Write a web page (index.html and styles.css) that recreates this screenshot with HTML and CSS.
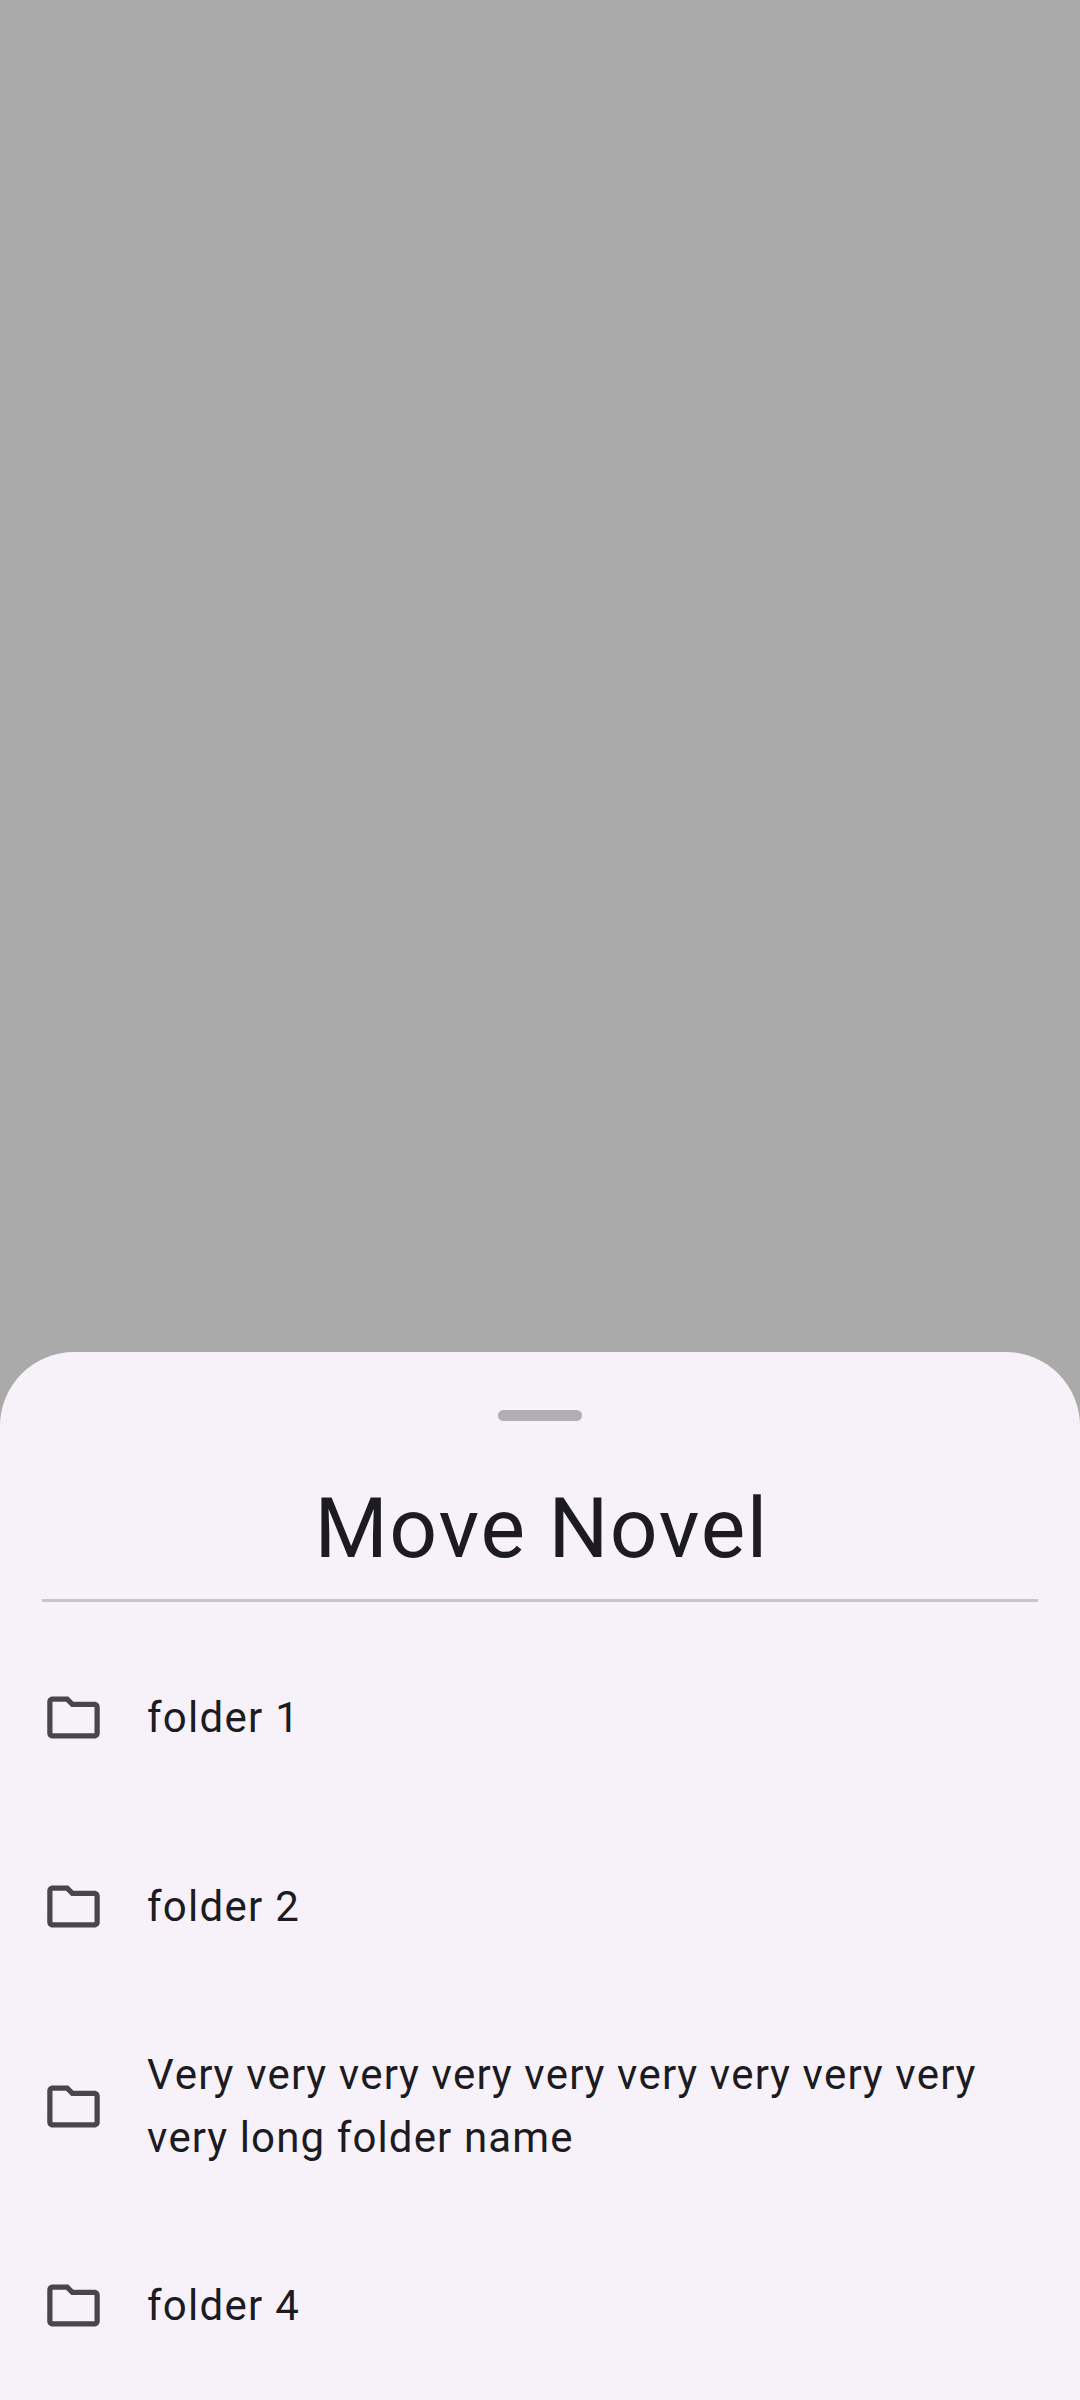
FILE: index.html
```html
<!DOCTYPE html>
<html lang="en">
<head>
<meta charset="utf-8">
<title>Move Novel</title>
<link rel="stylesheet" href="styles.css">
</head>
<body>
<svg class="defs" aria-hidden="true"><symbol id="folder" viewBox="0 0 24 24"><path d="M9.17 6l2 2H20v10H4V6h5.17M10 4H4c-1.1 0-1.99.9-1.99 2L2 18c0 1.1.9 2 2 2h16c1.1 0 2-.9 2-2V8c0-1.1-.9-2-2-2h-8l-2-2z"/></symbol></svg>
<main class="sheet">
  <div class="handle"></div>
  <h1 class="title">Move Novel</h1>
  <hr class="divider">
  <ul class="folders">
    <li class="folder"><svg class="icon"><use href="#folder"/></svg><span>folder 1</span></li>
    <li class="folder"><svg class="icon"><use href="#folder"/></svg><span>folder 2</span></li>
    <li class="folder folder-tall"><svg class="icon"><use href="#folder"/></svg><span>Very very very very very very very very very very long folder name</span></li>
    <li class="folder"><svg class="icon"><use href="#folder"/></svg><span>folder 4</span></li>
  </ul>
</main>
</body>
</html>
```
FILE: styles.css
```css
body {
  margin: 0;
  height: 2400px;
  display: flex;
  flex-direction: column;
  justify-content: flex-end;
  overflow: hidden;
  background: #aaaaaa;
  font-family: Roboto, sans-serif;
  font-kerning: none;
  color: #1c1b1f;
}
.defs { display: none; }
.sheet {
  box-sizing: border-box;
  height: 1048px;
  padding: 58px 42px 0;
  border-radius: 74px 74px 0 0;
  background: #f7f2fa;
  overflow: hidden;
}
.handle {
  width: 84px;
  height: 11px;
  margin: 0 auto;
  border-radius: 6px;
  background: #b2adb4;
}
.title {
  margin: 59px 0 0;
  padding-left: 3px;
  font-size: 84px;
  font-weight: 400;
  line-height: 98px;
  letter-spacing: 1.3125px;
  text-align: center;
}
.divider {
  height: 3px;
  margin: 21px 0 0;
  border: 0;
  background: #cac4d0;
}
.folders { margin: 21px 0 0; padding: 0; list-style: none; }
.folder {
  display: flex;
  align-items: center;
  height: 189px;
  gap: 42px;
  font-size: 42px;
  line-height: 63px;
  letter-spacing: 1.25px;
}
.folder-tall { height: 210px; letter-spacing: 1.12px; }
.icon { width: 63px; height: 63px; flex: none; fill: #49454f; }
```
